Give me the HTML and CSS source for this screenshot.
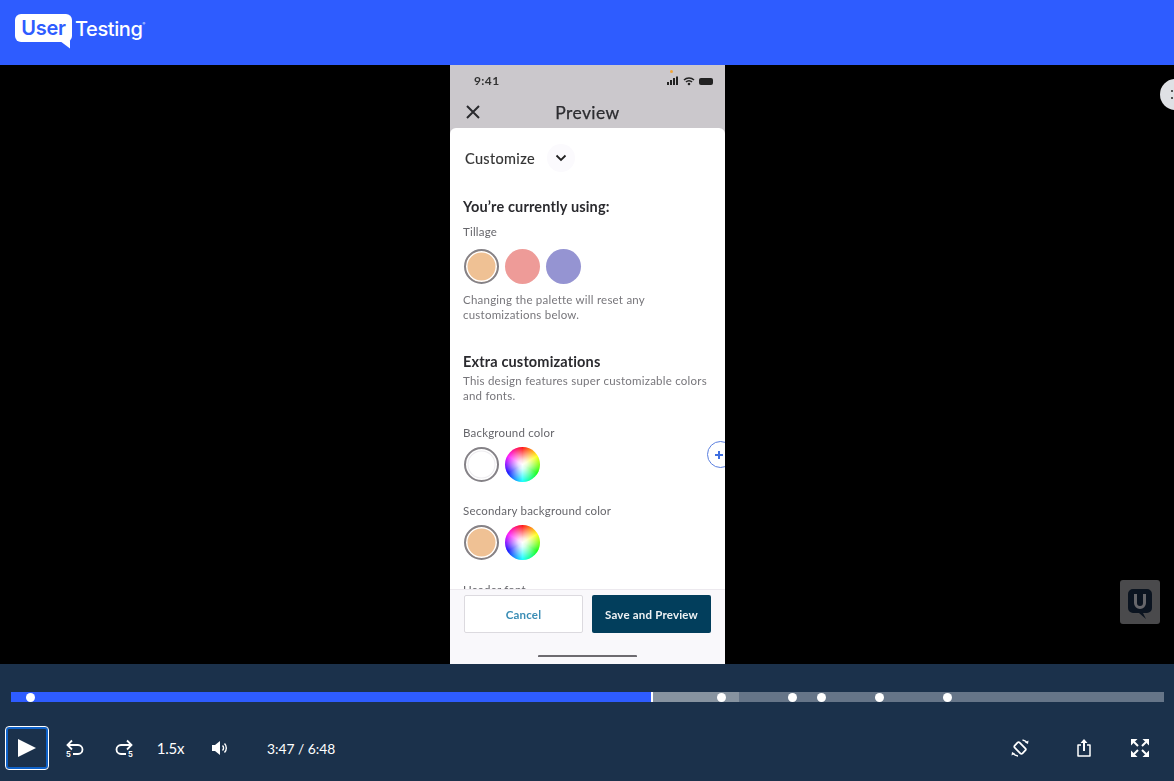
FILE: index.html
```html
<!DOCTYPE html>
<html lang="en">
<head>
<meta charset="utf-8">
<title>UserTesting video player</title>
<link rel="stylesheet" href="styles.css">
</head>
<body>
<div class="app">
  <header class="topbar">
    <div class="logo">
      <span class="logo-bubble">User<svg class="logo-tail" viewBox="0 0 10 8" width="10" height="8"><path d="M0 0H10V7.500Z" fill="#fff"/></svg></span>
      <span class="logo-word">Testing</span><span class="logo-reg">®</span>
    </div>
  </header>

  <main class="stage">
    <div class="phone">
      <div class="phone-top">
        <div class="status">
          <span class="clock">9:41</span>
          <span class="status-dot"></span>
          <svg class="status-icons" width="50" height="12" viewBox="0 0 50 12">
            <g fill="#222"><rect x="1" y="7" width="2" height="3"/><rect x="4" y="5" width="2" height="5"/><rect x="7" y="3" width="2" height="7"/><rect x="10" y="1.500" width="2" height="8.500"/>
            <rect x="33" y="3" width="14" height="7" rx="2"/></g>
            <path d="M18 5a7 7 0 0 1 10 0M20 7a4 4 0 0 1 6 0" fill="none" stroke="#222" stroke-width="1.500"/>
            <circle cx="23" cy="9" r="1.300" fill="#222"/>
          </svg>
        </div>
        <div class="navrow">
          <svg class="close-icon" width="14" height="14" viewBox="0 0 14 14"><path d="M1 1L13 13M13 1L1 13" stroke="#2a2a2e" stroke-width="2"/></svg>
          <span class="nav-title">Preview</span>
        </div>
      </div>
      <div class="sheet">
        <div class="sheet-body">
          <div class="customize">
            <span class="customize-label">Customize</span>
            <span class="chev"><svg width="12" height="8" viewBox="0 0 12 8"><path d="M1.500 1.500L6 6L10.500 1.500" fill="none" stroke="#222" stroke-width="1.800"/></svg></span>
          </div>
          <h2 class="heading heading-using">You’re currently using:</h2>
          <p class="label label-tillage">Tillage</p>
          <div class="swatches swatches-palette">
            <span class="swatch selected peach"></span>
            <span class="swatch salmon"></span>
            <span class="swatch periwinkle"></span>
          </div>
          <p class="hint hint-palette">Changing the palette will reset any<br>customizations below.</p>
          <h2 class="heading heading-extra">Extra customizations</h2>
          <p class="hint hint-extra">This design features super customizable colors<br>and fonts.</p>
          <p class="label label-bg">Background color</p>
          <div class="swatches">
            <span class="swatch selected blank"></span>
            <span class="swatch wheel"></span>
          </div>
          <p class="label label-second">Secondary background color</p>
          <div class="swatches">
            <span class="swatch selected peach"></span>
            <span class="swatch wheel"></span>
          </div>
          <p class="label label-font">Header font</p>
        </div>
        <div class="sheet-foot">
          <div class="foot-buttons">
            <span class="btn btn-cancel">Cancel</span>
            <span class="btn btn-save">Save and Preview</span>
          </div>
          <span class="home-bar"></span>
        </div>
        <span class="plus"><svg width="10" height="10" viewBox="0 0 10 10"><path d="M5 1V9M1 5H9" stroke="#3f6fe0" stroke-width="2"/></svg></span>
      </div>
    </div>
    <div class="side-handle"><span></span></div>
    <div class="u-badge">
      <svg width="26" height="32" viewBox="0 0 26 32"><path d="M6 1H20A5 5 0 0 1 25 6V20A5 5 0 0 1 20 25H16L19 31L12 25H6A5 5 0 0 1 1 20V6A5 5 0 0 1 6 1Z" fill="#0b1420"/><path d="M8.500 6V15A4.500 4.500 0 0 0 17.500 15V6" fill="none" stroke="#66666a" stroke-width="3"/></svg>
    </div>
  </main>

  <footer class="controls">
    <div class="track">
      <div class="played"></div>
      <div class="playhead"></div>
      <div class="buffered"></div>
      <span class="mark" style="left:19px"></span>
      <span class="mark" style="left:710px"></span>
      <span class="mark" style="left:781px"></span>
      <span class="mark" style="left:810px"></span>
      <span class="mark" style="left:868px"></span>
      <span class="mark" style="left:936px"></span>
    </div>
    <div class="ctrl-row">
      <button class="play"><svg width="20" height="20" viewBox="0 0 20 20"><path d="M1 1L19 10L1 19Z" fill="#fff"/></svg></button>
      <span class="ctrl ctrl-first">
        <svg width="20" height="22" viewBox="0 0 20 22"><path d="M3 8H13A4.500 4.500 0 0 1 13 17H8" fill="none" stroke="#fff" stroke-width="1.800"/><path d="M7 3.500L2.500 8L7 12.500" fill="none" stroke="#fff" stroke-width="1.800"/><text x="1" y="20" class="skip-num">5</text></svg>
      </span>
      <span class="ctrl">
        <svg width="20" height="22" viewBox="0 0 20 22"><path d="M17 8H7A4.500 4.500 0 0 0 7 17H12" fill="none" stroke="#fff" stroke-width="1.800"/><path d="M13 3.500L17.500 8L13 12.500" fill="none" stroke="#fff" stroke-width="1.800"/><text x="14" y="20" class="skip-num">5</text></svg>
      </span>
      <span class="ctrl speed">1.5x</span>
      <span class="ctrl">
        <svg width="18" height="16" viewBox="0 0 18 16"><path d="M1 5H4L9 1V15L4 11H1Z" fill="#fff"/><path d="M11.500 5.500A3.500 3.500 0 0 1 11.500 10.500M13.500 3.500A6.500 6.500 0 0 1 13.500 12.500" fill="none" stroke="#fff" stroke-width="1.400"/></svg>
      </span>
      <span class="time">3:47 / 6:48</span>
      <span class="ctrl-spacer"></span>
      <span class="ctrl">
        <svg width="20" height="20" viewBox="0 0 20 20"><rect x="6.500" y="4.500" width="7" height="11" rx="1.500" transform="rotate(-45 10 10)" fill="none" stroke="#fff" stroke-width="1.800"/><path d="M12.500 2A8 8 0 0 1 17 4.500M8 18A8 8 0 0 1 3 15.500" fill="none" stroke="#fff" stroke-width="1.300"/><path d="M18.500 2.500L18 6L15 4.500ZM1.500 17.500L2 14L5 15.500Z" fill="#fff"/></svg>
      </span>
      <span class="ctrl ctrl-share">
        <svg width="16" height="20" viewBox="0 0 16 20"><path d="M5 7H2V18H14V7H11" fill="none" stroke="#fff" stroke-width="1.500" stroke-linejoin="round"/><path d="M8 13V2" stroke="#fff" stroke-width="2"/><path d="M4.500 5L8 1L11.500 5Z" fill="#fff"/></svg>
      </span>
      <span class="ctrl ctrl-full">
        <svg width="18" height="18" viewBox="0 0 18 18"><g fill="#fff"><path d="M0 0H6.500L0 6.500Z"/><path d="M18 0H11.500L18 6.500Z"/><path d="M0 18H6.500L0 11.500Z"/><path d="M18 18H11.500L18 11.500Z"/></g><path d="M3 3L7 7M15 3L11 7M3 15L7 11M15 15L11 11" stroke="#fff" stroke-width="2"/></svg>
      </span>
    </div>
  </footer>
</div>
</body>
</html>
```
FILE: styles.css
```css
* { box-sizing: border-box; }
html, body { margin: 0; height: 100%; overflow: hidden; }
body { font-family: "Lato", "Open Sans", sans-serif; background: #000; }
h2, p { margin: 0; font-weight: inherit; }
.app { width: 1174px; height: 781px; display: flex; flex-direction: column; }

.topbar { height: 65px; flex: none; background: #2e5cff; display: flex; align-items: flex-start; padding: 14px 0 0 15px; }
.logo { display: flex; align-items: flex-start; color: #fff; font-family: "Inter", sans-serif; }
.logo-bubble { position: relative; display: block; width: 57px; height: 28px; background: #fff; border-radius: 6px; color: #2e5cff; font-size: 20px; font-weight: 600; line-height: 29px; text-align: center; letter-spacing: -.3px; }
.logo-tail { position: absolute; left: 45px; top: 27px; }
.logo-word { margin-left: 3px; font-size: 20px; font-weight: 500; line-height: 31px; letter-spacing: -.4px; }
.logo-reg { font-size: 4px; line-height: 20px; }

.stage { position: relative; height: 599px; flex: none; background: #000; display: flex; justify-content: center; overflow: hidden; }
.phone { width: 275px; height: 599px; margin-left: 1px; background: #cbc8cc; color: #2a2a2e; filter: blur(.4px); position: relative; overflow: hidden; font-family: "Lato", sans-serif; }
.phone-top { height: 64px; }
.status { position: relative; height: 31px; display: flex; align-items: center; justify-content: space-between; padding: 0 0 0 24px; }
.clock { font-size: 12px; font-weight: 700; color: #333; letter-spacing: .4px; }
.status-dot { position: absolute; left: 220px; top: 5px; width: 3px; height: 3px; border-radius: 50%; background: #f0a53a; }
.status-icons { margin-right: 9px; margin-top: 1px; }
.navrow { position: relative; height: 32px; display: flex; align-items: center; justify-content: center; }
.close-icon { position: absolute; left: 16px; top: 9px; }
.nav-title { font-size: 17.500px; font-weight: 400; letter-spacing: .4px; color: #2c2c30; -webkit-text-stroke: .25px #2c2c30; }

.sheet { position: absolute; left: 0; right: 0; top: 63px; bottom: 0; background: #fff; border-radius: 6px 6px 0 0; display: flex; flex-direction: column; }
.sheet-body { flex: 1; overflow: hidden; padding: 0 13px; }
.customize { display: flex; align-items: center; height: 28px; margin: 16px 0 0 2px; }
.customize-label { font-size: 14.500px; font-weight: 400; letter-spacing: .35px; color: #333; -webkit-text-stroke: .15px #333; }
.chev { width: 28px; height: 28px; margin-left: 12px; border-radius: 50%; background: #fbfafd; display: flex; align-items: center; justify-content: center; }
.heading { font-size: 14.500px; font-weight: 700; letter-spacing: .15px; color: #2a2a2e; line-height: 18px; }
.heading-using { margin-top: 26px; }
.heading-extra { margin-top: 31px; }
.label { font-size: 11.500px; color: #66666b; line-height: 14px; letter-spacing: .2px; }
.label-tillage { margin-top: 9px; }
.label-bg { margin-top: 23px; }
.label-second { margin-top: 22px; }
.label-font { margin-top: 23px; }
.swatches { display: flex; gap: 6px; margin: 7px 0 0 1px; }
.swatches-palette { margin-top: 10px; }
.swatch { width: 35px; height: 35px; border-radius: 50%; display: block; }
.selected { border: 2px solid #858287; box-shadow: inset 0 0 0 1.500px #fff; }
.peach { background: #efc194; }
.salmon { background: #ee9b98; }
.periwinkle { background: #9594d2; }
.blank { background: #fff; box-shadow: inset 0 0 0 1.500px #fff, inset 0 0 0 2.500px #eeedf0; }
.wheel { background: radial-gradient(circle, #fff 0, rgba(255,255,255,.85) 18%, rgba(255,255,255,0) 75%), conic-gradient(#f00, #ff0 60deg, #0f0 120deg, #0ff 180deg, #00f 240deg, #f0f 300deg, #f00); }
.hint { font-size: 11.500px; color: #77767b; line-height: 15px; letter-spacing: .23px; }
.hint-palette { margin-top: 8px; }
.hint-extra { margin-top: 2px; }

.sheet-foot { height: 75px; flex: none; background: #f9f8fb; border-top: 1px solid #ece9ee; display: flex; flex-direction: column; align-items: center; }
.foot-buttons { display: flex; gap: 9px; margin-top: 5px; }
.btn { height: 38px; border-radius: 2px; display: flex; align-items: center; justify-content: center; font-size: 11.500px; font-weight: 700; letter-spacing: .2px; }
.btn-cancel { width: 119px; background: #fff; border: 1px solid #dcdadf; color: #3a8db5; }
.btn-save { width: 119px; background: #023e5c; color: #eef2f4; }
.home-bar { display: block; width: 99px; height: 2px; margin-top: 22px; background: #6d6b70; border-radius: 1px 1px 0 0; }
.plus { position: absolute; left: 257px; top: 313px; width: 27px; height: 27px; border-radius: 50%; border: 1.500px solid #5b80e0; background: #fff; display: flex; align-items: center; justify-content: flex-start; padding-left: 6px; }

.side-handle { position: absolute; left: 1160px; top: 14px; width: 31px; height: 31px; border-radius: 50%; background: #dfe1e5; }
.side-handle span { position: absolute; left: 11px; top: 11px; width: 2px; height: 2px; background: #555; box-shadow: 0 7px 0 #555; }
.u-badge { position: absolute; left: 1120px; top: 515px; width: 40px; height: 44px; background: #4a4a4c; border-radius: 3px; display: flex; align-items: center; justify-content: center; padding-top: 3px; }

.controls { height: 117px; flex: none; background: #1b314b; padding-top: 28px; }
.track { position: relative; margin: 0 10px 0 11px; height: 10px; background: #667588; }
.played { position: absolute; left: 0; top: 0; bottom: 0; width: 640px; background: #2e5cff; }
.playhead { position: absolute; left: 640px; top: 0; bottom: 0; width: 2px; background: #fff; }
.buffered { position: absolute; left: 642px; top: 0; bottom: 0; width: 86px; background: #8793a0; }
.mark { position: absolute; top: .5px; width: 9px; height: 9px; margin-left: -4.500px; border-radius: 50%; background: #fff; }
.ctrl-row { display: flex; align-items: center; height: 44px; margin-top: 24px; padding-left: 5px; color: #fff; }
.play { width: 44px; height: 44px; padding: 0; background: #1b314b; border: 1px solid #fff; box-shadow: inset 0 0 0 2px #0f62c9; border-radius: 4px; display: flex; align-items: center; justify-content: center; }
.ctrl { width: 49px; flex: none; display: flex; align-items: center; justify-content: center; }
.ctrl-first { margin-left: 1px; }
.skip-num { font: 700 7.500px "Inter", sans-serif; fill: #fff; }
.speed { margin-left: -2px; font-size: 15px; letter-spacing: -.2px; font-family: "Lato", sans-serif; }
.time { margin-left: 23px; font-size: 13.800px; }
.ctrl-spacer { flex: 1; }
.ctrl-share { margin-left: 15px; }
.ctrl-full { margin-left: 7px; margin-right: 10px; }
```
